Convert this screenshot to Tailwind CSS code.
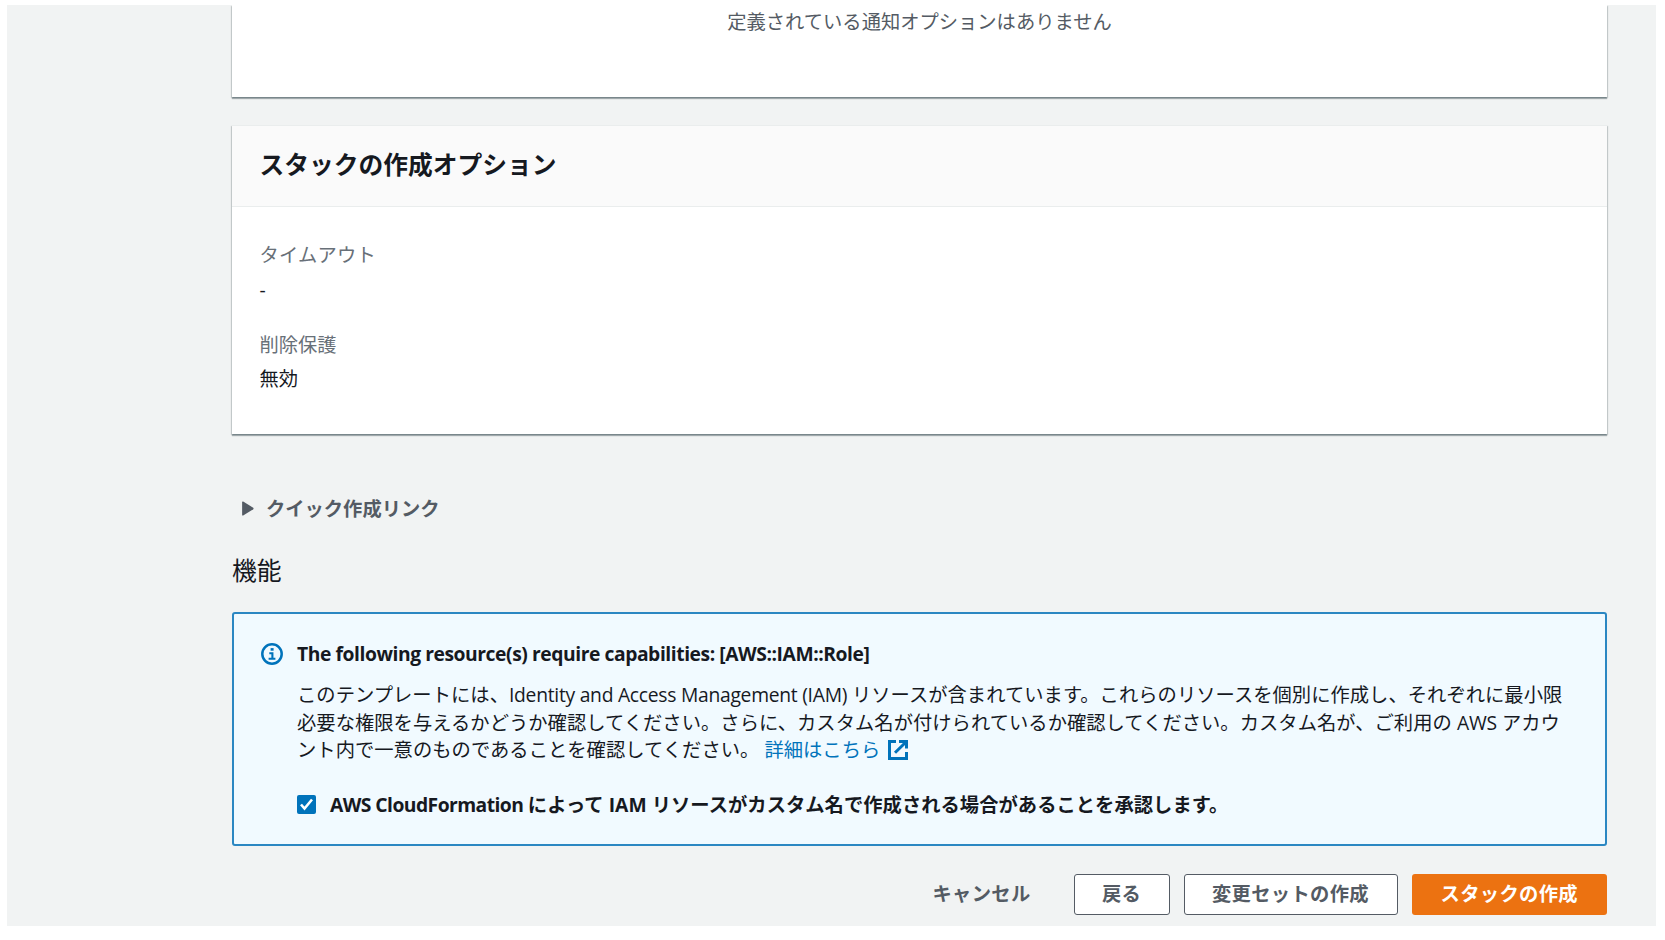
<!DOCTYPE html>
<html lang="ja">
<head>
    <meta charset="UTF-8">
    <meta name="viewport" content="width=device-width, initial-scale=1.0">
    <title>スタックの作成</title>
    <script src="https://cdn.jsdelivr.net/npm/@tailwindcss/browser@4"></script>
</head>
<body class="bg-white h-[940px] overflow-hidden pt-[5px] pl-[7px] font-['Open_Sans','Noto_Sans_CJK_JP',sans-serif] text-[19.3px] leading-[27.5px] text-[#16191f]">
    <div class="w-[1649px] h-[921px] bg-[#f1f3f3] pl-[225px] pr-[49px] flex flex-col">
        <!-- Notification options -->
        <div class="h-[92px] shrink-0 bg-white pt-[3px] text-center text-[#545b64] shadow-[0_2px_1px_0_rgba(0,28,36,0.3),1px_1px_1px_0_rgba(0,28,36,0.15),-1px_1px_1px_0_rgba(0,28,36,0.15)]">
            定義されている通知オプションはありません
        </div>

        <!-- Stack creation options -->
        <div class="mt-[28px] h-[309px] shrink-0 bg-white shadow-[0_2px_1px_0_rgba(0,28,36,0.3),1px_1px_1px_0_rgba(0,28,36,0.15),-1px_1px_1px_0_rgba(0,28,36,0.15)]">
            <div class="h-[82px] bg-[#fafafa] border-y border-[#eaeded] px-[27.5px] pb-[2px] flex items-center">
                <h2 class="text-[24.75px] leading-[34px] font-bold">スタックの作成オプション</h2>
            </div>
            <div class="px-[27.5px] pt-[34px]">
                <div class="text-[#687078] tracking-[0.2px]">タイムアウト</div>
                <div class="mt-[7px]">-</div>
                <div class="mt-[28px] text-[#687078]">削除保護</div>
                <div class="mt-[6px]">無効</div>
            </div>
        </div>

        <!-- Quick create link -->
        <div class="mt-[61px] pl-[10px] flex items-center gap-[12px] font-bold text-[#545b64]">
            <svg class="w-[12px] h-[15px]" viewBox="0 0 11 14" fill="currentColor"><path d="M0 1.2Q0 0 1 .5L10.4 6.3Q11 7 10.4 7.7L1 13.5Q0 14 0 12.8Z"/></svg>
            クイック作成リンク
        </div>

        <h2 class="mt-[31px] text-[24.75px] leading-[34px]">機能</h2>

        <!-- Capabilities alert -->
        <div class="mt-[24px] h-[234px] shrink-0 border-2 border-[#2b87c2] rounded-[3px] bg-[#f1faff] pl-[27px] pt-[26px] flex gap-[14px]">
            <svg class="w-[22px] h-[22px] mt-[3px] shrink-0" viewBox="0 0 22 22" fill="none" stroke="#0073bb" stroke-width="2.5"><circle cx="11" cy="11" r="9.7"/><path d="M8.3 10.2H11.4V15M7.6 15.8H14.4" stroke-width="2.1"/><path d="M9.6 6.4H12.6" stroke-width="2.6"/></svg>
            <div class="whitespace-nowrap">
                <div class="font-bold tracking-[-0.44px]">The following resource(s) require capabilities: [AWS::IAM::Role]</div>
                <div class="mt-[14px] tracking-[0.04px]">
                    このテンプレートには、<span class="tracking-[-0.27px]">Identity and Access Management (IAM) </span>リソースが含まれています。これらのリソースを個別に作成し、それぞれに最小限<br>
                    必要な権限を与えるかどうか確認してください。さらに、カスタム名が付けられているか確認してください。カスタム名が、ご利用の <span class="tracking-[-0.2px]">AWS</span> アカウ<br>
                    ント内で一意のものであることを確認してください。
                    <a class="text-[#0073bb]">詳細はこちら<svg class="inline ml-[8px] -mt-[4px] w-[20px] h-[20px]" viewBox="0 0 20 20" fill="none" stroke="#0073bb" stroke-width="3"><path d="M8 1.5H1.5V18.5H18.5V12M11 1.5H18.5V8.5M18 2L7 12.8"/></svg></a>
                </div>
                <div class="mt-[27px] flex items-center font-bold">
                    <svg class="w-[19px] h-[19px] mr-[14px]" viewBox="0 0 19 19"><rect width="19" height="19" rx="2" fill="#0073bb"/><path d="M4 9.5L7.5 13.5L15 4.5" fill="none" stroke="#fff" stroke-width="2.6"/></svg>
                    <div class="tracking-[0.04px]"><span class="tracking-[-0.55px]">AWS CloudFormation </span>によって<span> IAM </span>リソースがカスタム名で作成される場合があることを承認します。</div>
                </div>
            </div>
        </div>

        <!-- Actions -->
        <div class="mt-[28px] flex justify-end items-center gap-[14px] font-bold tracking-[0.34px] text-[#545b64]">
            <button class="h-[41px] px-[29px]">キャンセル</button>
            <button class="h-[41px] w-[96px] bg-white border-[1.5px] border-[#545b64] rounded-[3px]">戻る</button>
            <button class="h-[41px] w-[214px] bg-white border-[1.5px] border-[#545b64] rounded-[3px]">変更セットの作成</button>
            <button class="h-[41px] w-[195.5px] bg-[#ec7211] text-white rounded-[3px]">スタックの作成</button>
        </div>
    </div>
</body>
</html>
